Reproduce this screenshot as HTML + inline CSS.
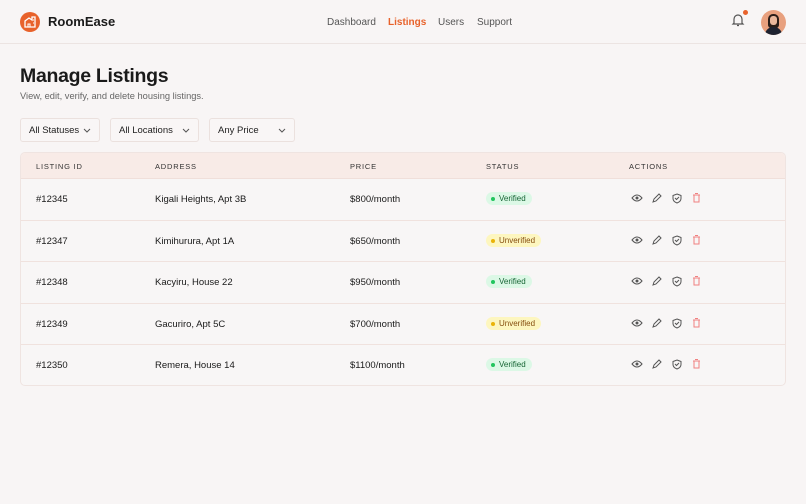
<!DOCTYPE html>
<html><head><style>
*{box-sizing:border-box;margin:0;padding:0}
body{width:806px;height:504px;background:#f8f5f5;font-family:"Liberation Sans",sans-serif;color:#1a1a1a;position:relative;overflow:hidden}
.hdr{position:absolute;left:0;top:0;width:806px;height:44px;border-bottom:1px solid #ece4e2}
.logo{position:absolute;left:20px;top:12px;width:20px;height:20px;border-radius:50%;background:#e8622b}
.brand{position:absolute;left:48px;top:14px;font-size:13px;font-weight:bold}
.nav{position:absolute;top:17px;font-size:10px;color:#555}
h1{position:absolute;left:20px;top:65px;font-size:19.5px;font-weight:bold;letter-spacing:-0.3px}
.sub{position:absolute;left:20px;top:91px;font-size:9.3px;color:#666}
.sel{position:absolute;top:118px;height:24px;border:1px solid #ebe1de;border-radius:3px;background:#f9f6f6;font-size:9.5px;padding:6px 0 0 8px;color:#222}
.sel svg{position:absolute;right:8px;top:9px}
.tbl{position:absolute;left:20px;top:152px;width:766px;height:234px;border:1px solid #efe4e1;border-radius:5px;overflow:hidden;background:#f8f6f6}
.th{height:26px;background:#f8ebe7;border-bottom:1px solid #f0dfda;position:relative;font-size:7.5px;letter-spacing:0.8px;color:#333}
.th span,.row span{position:absolute}
.th span{top:9px}
.row{height:41.5px;border-bottom:1px solid #f0e2de;position:relative;font-size:9.5px}
.row:last-child{border-bottom:none}
.row span{top:15px}
.b{font-size:8px;padding:2px 6px 2px 13px;border-radius:7px;top:13px!important;position:absolute}
.b:before{content:"";position:absolute;left:5px;top:5px;width:4px;height:4px;border-radius:50%}
.v{background:#dcf8e6;color:#166534}.v:before{background:#22c55e}
.u{background:#fdf6bf;color:#854d0e}.u:before{background:#eab308}
.ic{position:absolute;top:13px}
</style></head><body>
<div class="hdr">
<div class="logo"><svg width="20" height="20" viewBox="0 0 20 20"><path d="M5 15V9l4-3 3 2V5h3v10z" fill="none" stroke="#fff" stroke-width="1.3"/><path d="M8 15v-3h2v3M13 8h1M13 11h1" fill="none" stroke="#fff" stroke-width="1"/></svg></div>
<div class="brand">RoomEase</div>
<div class="nav" style="left:327px">Dashboard</div>
<div class="nav" style="left:388px;color:#e8622b;font-weight:bold">Listings</div>
<div class="nav" style="left:438px">Users</div>
<div class="nav" style="left:477px">Support</div>
<svg style="position:absolute;left:731px;top:12px" width="14" height="16" viewBox="0 0 14 16"><path d="M3 11V7a4 4 0 0 1 8 0v4l1 1H2z M6 13.5h2" fill="none" stroke="#555" stroke-width="1.2"/></svg>
<div style="position:absolute;left:743px;top:10px;width:5px;height:5px;border-radius:50%;background:#e8622b"></div>
<div style="position:absolute;left:761px;top:10px;width:25px;height:25px;border-radius:50%;background:#e8a07e;overflow:hidden"><div style="position:absolute;left:7px;top:4px;width:11px;height:14px;border-radius:5px 5px 3px 3px;background:#2a1d18"></div><div style="position:absolute;left:9px;top:6px;width:7px;height:9px;border-radius:3px;background:#e9b79c"></div><div style="position:absolute;left:4px;top:17px;width:17px;height:10px;border-radius:8px 8px 0 0;background:#1e2230"></div></div>
</div>
<h1>Manage Listings</h1>
<div class="sub">View, edit, verify, and delete housing listings.</div>
<div class="sel" style="left:20px;width:80px">All Statuses<svg width="8" height="5"><path d="M1 1l3 3 3-3" fill="none" stroke="#555"/></svg></div>
<div class="sel" style="left:110px;width:89px">All Locations<svg width="8" height="5"><path d="M1 1l3 3 3-3" fill="none" stroke="#555"/></svg></div>
<div class="sel" style="left:209px;width:86px">Any Price<svg width="8" height="5"><path d="M1 1l3 3 3-3" fill="none" stroke="#555"/></svg></div>
<div class="tbl">
<div class="th"><span style="left:15px">LISTING ID</span><span style="left:134px">ADDRESS</span><span style="left:329px">PRICE</span><span style="left:465px">STATUS</span><span style="left:608px">ACTIONS</span></div>
<div class="row"><span style="left:15px">#12345</span><span style="left:134px">Kigali Heights, Apt 3B</span><span style="left:329px">$800/month</span><span class="b v" style="left:465px">Verified</span>
<svg class="ic" style="left:610px" width="90" height="12" viewBox="0 0 90 12"><path d="M1 6q5-6 10 0q-5 6-10 0z" fill="none" stroke="#555"/><circle cx="6" cy="6" r="1.5" fill="#555"/><path d="M22 10l1-3 5-5 2 2-5 5z" fill="none" stroke="#555"/><path d="M46 2l4 1.5v3q0 3-4 4.5q-4-1.5-4-4.5v-3z M44 6l1.5 1.5 2.5-2.5" fill="none" stroke="#555"/><path d="M62 3h7M63 3v7h5V3M64 1.5h3" fill="none" stroke="#f08080"/></svg></div>
<div class="row"><span style="left:15px">#12347</span><span style="left:134px">Kimihurura, Apt 1A</span><span style="left:329px">$650/month</span><span class="b u" style="left:465px">Unverified</span>
<svg class="ic" style="left:610px" width="90" height="12" viewBox="0 0 90 12"><path d="M1 6q5-6 10 0q-5 6-10 0z" fill="none" stroke="#555"/><circle cx="6" cy="6" r="1.5" fill="#555"/><path d="M22 10l1-3 5-5 2 2-5 5z" fill="none" stroke="#555"/><path d="M46 2l4 1.5v3q0 3-4 4.5q-4-1.5-4-4.5v-3z M44 6l1.5 1.5 2.5-2.5" fill="none" stroke="#555"/><path d="M62 3h7M63 3v7h5V3M64 1.5h3" fill="none" stroke="#f08080"/></svg></div>
<div class="row"><span style="left:15px">#12348</span><span style="left:134px">Kacyiru, House 22</span><span style="left:329px">$950/month</span><span class="b v" style="left:465px">Verified</span>
<svg class="ic" style="left:610px" width="90" height="12" viewBox="0 0 90 12"><path d="M1 6q5-6 10 0q-5 6-10 0z" fill="none" stroke="#555"/><circle cx="6" cy="6" r="1.5" fill="#555"/><path d="M22 10l1-3 5-5 2 2-5 5z" fill="none" stroke="#555"/><path d="M46 2l4 1.5v3q0 3-4 4.5q-4-1.5-4-4.5v-3z M44 6l1.5 1.5 2.5-2.5" fill="none" stroke="#555"/><path d="M62 3h7M63 3v7h5V3M64 1.5h3" fill="none" stroke="#f08080"/></svg></div>
<div class="row"><span style="left:15px">#12349</span><span style="left:134px">Gacuriro, Apt 5C</span><span style="left:329px">$700/month</span><span class="b u" style="left:465px">Unverified</span>
<svg class="ic" style="left:610px" width="90" height="12" viewBox="0 0 90 12"><path d="M1 6q5-6 10 0q-5 6-10 0z" fill="none" stroke="#555"/><circle cx="6" cy="6" r="1.5" fill="#555"/><path d="M22 10l1-3 5-5 2 2-5 5z" fill="none" stroke="#555"/><path d="M46 2l4 1.5v3q0 3-4 4.5q-4-1.5-4-4.5v-3z M44 6l1.5 1.5 2.5-2.5" fill="none" stroke="#555"/><path d="M62 3h7M63 3v7h5V3M64 1.5h3" fill="none" stroke="#f08080"/></svg></div>
<div class="row"><span style="left:15px">#12350</span><span style="left:134px">Remera, House 14</span><span style="left:329px">$1100/month</span><span class="b v" style="left:465px">Verified</span>
<svg class="ic" style="left:610px" width="90" height="12" viewBox="0 0 90 12"><path d="M1 6q5-6 10 0q-5 6-10 0z" fill="none" stroke="#555"/><circle cx="6" cy="6" r="1.5" fill="#555"/><path d="M22 10l1-3 5-5 2 2-5 5z" fill="none" stroke="#555"/><path d="M46 2l4 1.5v3q0 3-4 4.5q-4-1.5-4-4.5v-3z M44 6l1.5 1.5 2.5-2.5" fill="none" stroke="#555"/><path d="M62 3h7M63 3v7h5V3M64 1.5h3" fill="none" stroke="#f08080"/></svg></div>
</div>
</body></html>
